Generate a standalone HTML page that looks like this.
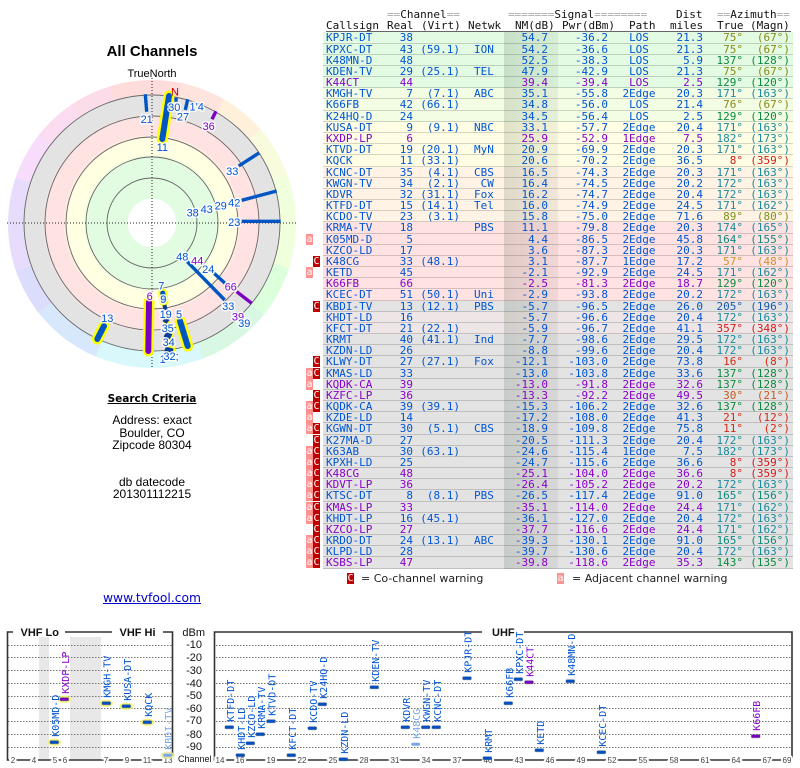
<!DOCTYPE html>
<html><head><meta charset="utf-8"><title>All Channels</title>
<style>
html,body{margin:0;padding:0;background:#fff;width:800px;height:768px;overflow:hidden}
body{position:relative;font-family:"DejaVu Sans",sans-serif}
.t{position:absolute;white-space:pre;color:#000}
.h{position:absolute;font:11px/11px "DejaVu Sans Mono",monospace;white-space:pre;color:#111}
.h em{font-style:normal;color:#aaa}
.r{position:absolute;left:323px;width:470px;font:11px/11px "DejaVu Sans Mono",monospace;color:#0055d5;box-shadow:inset 0 -1px 0 rgba(0,0,0,.16)}
.r b{position:absolute;top:0;font-weight:normal;white-space:pre;z-index:2}
.r b:nth-child(1){left:3px}
.r b:nth-child(2){right:380px}
.r b:nth-child(3){right:333px}
.r b:nth-child(4){left:151px}
.r b:nth-child(5){right:245px}
.r b:nth-child(6){right:185px}
.r b:nth-child(7){left:286px;width:60px;text-align:center}
.r b:nth-child(8){right:90px}
.r b:nth-child(9){right:50px}
.r b:nth-child(10){right:3px}
.p{color:#8800cc}
.g{background:#e2fbe2}.l{background:#f2fde4}.y{background:#fffee4}.o{background:#fef3e4}.k{background:#ffe2e2}.e{background:#e3e3e3}.m{background:#eee6e6}
.r b.A,.r b.C{top:0;width:7px;height:11px;text-align:center;color:#fff;font:10px/11px "DejaVu Sans Mono",monospace}
.r b.A{left:-17px;background:#ff9191}
.r b.C{left:-10px;background:#c00000}
.r b.a1{color:#8a8a14}.r b.a2{color:#0c8a3c}.r b.a3{color:#1a8a9a}.r b.a4{color:#d81818}.r b.a5{color:#d09030}.r b.a6{color:#1858b0}.r b.a7{color:#d82810}.r b.a8{color:#c85820}.r b.a9{color:#7e9018}.r b.a0{color:#108a7a}
#ov{position:absolute;left:504px;top:32px;width:54px;height:537px;background:linear-gradient(90deg,rgba(0,30,0,.12),rgba(0,0,0,.05));z-index:1}
#hue{position:absolute;left:8px;top:79.5px;width:288px;height:288px;border-radius:50%;background:conic-gradient(#ffdcdc 0 12deg,#fee4dc 12deg 30deg,#fff0dc 30deg 49deg,#f8fcdc 49deg 70deg,#f0ffdc 70deg 108deg,#dcffdc 108deg 129deg,#d8f8e4 129deg 159deg,#d8f8fc 159deg 203deg,#d8e8fc 203deg 232deg,#dcdcfc 232deg 251deg,#e8dcfc 251deg 289deg,#f8dcfc 289deg 308deg,#fcdcf0 308deg 326deg,#fcdce8 326deg 343deg,#ffdcdc 343deg 360deg)}
#rad{position:absolute;left:24px;top:95px;width:256px;height:256px;border-radius:50%;background:radial-gradient(circle closest-side,#fff 0,#fff 24px,#e2fce2 24.5px,#e2fce2 64px,#ffffe2 69px,#ffffe2 84px,#ffe2e2 89px,#ffe2e2 105px,#e3e3e3 110px,#e3e3e3 128px)}
svg{position:absolute;left:0;top:0}
.lb{font:11px "Liberation Sans",sans-serif;fill:#0055d5;text-anchor:middle;paint-order:stroke;stroke:rgba(255,255,255,.85);stroke-width:3px;stroke-linejoin:round}
.lp{fill:#8800cc}
.cl{font:10px "DejaVu Sans Mono",monospace;fill:#0055d5}
.cp{fill:#8800cc}.cf{fill:#7ba6e4}
.tk{font:8px "Liberation Sans",sans-serif;fill:#444;text-anchor:middle;paint-order:stroke;stroke:#fff;stroke-width:4px}
.db{font:11px "Liberation Sans",sans-serif;fill:#111;text-anchor:end}
.hd{font:bold 11px "Liberation Sans",sans-serif;fill:#111}
</style></head><body>

<div class="t" style="left:52px;top:43px;width:200px;text-align:center;font:bold 15px/17px 'Liberation Sans',sans-serif">All Channels</div>
<div class="t" style="left:52px;top:68px;width:200px;text-align:center;font:11px/13px 'Liberation Sans',sans-serif">TrueNorth</div>
<div id="hue"></div><div id="rad"></div>

<svg width="800" height="400" viewBox="0 0 800 400">
<g fill="none" stroke="#666" stroke-width=".9">
<circle cx="152" cy="223" r="45"/><circle cx="152" cy="223" r="66"/><circle cx="152" cy="223" r="86"/><circle cx="152" cy="223" r="107"/><circle cx="152" cy="223" r="128"/>
</g>
<g stroke="#222" stroke-width="1" stroke-dasharray="1 2">
<line x1="7" y1="223" x2="297" y2="223"/><line x1="152" y1="78" x2="152" y2="368"/>
</g>
<g stroke-linecap="round" fill="none">
<g stroke="#ffff00" stroke-width="11">
<line x1="169" y1="96" x2="162.3" y2="139"/>
<line x1="149" y1="302" x2="148.3" y2="351"/>
<line x1="180" y1="321" x2="187.7" y2="346"/>
<line x1="104" y1="326" x2="97.3" y2="339"/>
<line x1="162.7" y1="293" x2="164" y2="302" stroke-width="9"/>
<line x1="166" y1="318" x2="172" y2="350" stroke-width="7"/>
</g>
<g stroke="#0055c4" stroke-width="6">
<line x1="169" y1="96" x2="162.3" y2="139"/>
<line x1="180" y1="321" x2="187.7" y2="346"/>
<line x1="104" y1="326" x2="97.3" y2="339"/>
<line x1="162.7" y1="293" x2="164" y2="300" stroke-width="5"/>
</g>
<line x1="149" y1="302" x2="148.3" y2="351" stroke="#7a00c4" stroke-width="6"/>
<g stroke="#0a3f96" stroke-width="4" stroke-linecap="butt">
<line x1="164.5" y1="305" x2="165.5" y2="310"/>
<line x1="164" y1="319" x2="168" y2="322" stroke-width="5"/>
<line x1="165" y1="334" x2="171" y2="337" stroke-width="6"/>
<line x1="165" y1="349" x2="173" y2="351" stroke-width="5"/>
</g>
<g stroke="#0055c4" stroke-width="3.4" stroke-linecap="butt">
<line x1="145.3" y1="94.3" x2="146.7" y2="111.7"/>
<line x1="176" y1="97.7" x2="176" y2="101.7"/>
<line x1="187.7" y1="99.3" x2="185.3" y2="110"/>
<line x1="259" y1="153" x2="238.7" y2="166"/>
<line x1="276.7" y1="191" x2="241.7" y2="200.3"/>
<line x1="280.7" y1="221.3" x2="241.7" y2="221.3"/>
<line x1="187.3" y1="261.7" x2="224.7" y2="300"/>
<line x1="214" y1="273.3" x2="225" y2="283.3"/>
</g>
<g stroke="#7a00c4" stroke-width="3.4" stroke-linecap="butt">
<line x1="216" y1="111.3" x2="212" y2="119.3"/>
<line x1="236.7" y1="291.7" x2="251.7" y2="303.3"/>
</g>
</g>
<text x="175" y="95.5" style="font:11px 'Liberation Sans',sans-serif;fill:#cc0000;text-anchor:middle">N</text>
<g>
<text class="lb" x="146.7" y="123">21</text>
<text class="lb" x="162.3" y="151">11</text>
<text class="lb" x="174.3" y="111">30</text>
<text class="lb" x="183" y="120.5">27</text>
<text class="lb" x="196.7" y="110.5">1'4</text>
<text class="lb lp" x="208.7" y="130">36</text>
<text class="lb" x="232.3" y="175">33</text>
<text class="lb" x="234.3" y="206.5">42</text>
<text class="lb" x="220.7" y="209.5">29</text>
<text class="lb" x="206.7" y="213">43</text>
<text class="lb" x="192.7" y="216.5">38</text>
<text class="lb" x="234.3" y="226">23</text>
<text class="lb" x="182.3" y="260.5">48</text>
<text class="lb lp" x="197.3" y="264.5">44</text>
<text class="lb" x="208.3" y="273">24</text>
<text class="lb lp" x="230.7" y="290.5">66</text>
<text class="lb" x="228.3" y="310">33</text>
<text class="lb lp" x="238" y="320.5">39</text>
<text class="lb" x="244.3" y="327">39</text>
<text class="lb" x="161.3" y="289.5">7</text>
<text class="lb" x="163.3" y="303">9</text>
<text class="lb" x="165.7" y="318">19</text>
<text class="lb" x="167.7" y="332">35</text>
<text class="lb" x="168.7" y="346">34</text>
<text class="lb" x="162.7" y="363">1</text>
<text class="lb" x="171" y="360">32;</text>
<text class="lb lp" x="149.7" y="300">6</text>
<text class="lb" x="179" y="318">5</text>
<text class="lb" x="107.3" y="322">13</text>
</g>
</svg>

<div class="t" style="left:52px;top:392px;width:200px;text-align:center;font:bold 10.5px/14px 'DejaVu Sans',sans-serif;text-decoration:underline">Search Criteria</div>
<div class="t" style="left:52px;top:414px;width:200px;text-align:center;font:12px/12.5px 'Liberation Sans',sans-serif">Address: exact
Boulder, CO
Zipcode 80304</div>
<div class="t" style="left:52px;top:476px;width:200px;text-align:center;font:12px/12px 'Liberation Sans',sans-serif">db datecode
201301112215</div>
<div class="t" style="left:52px;top:591px;width:200px;text-align:center;font:12.3px/15px 'DejaVu Sans',sans-serif;color:#0000cc;text-decoration:underline">www.tvfool.com</div>

<div class="h" style="left:387px;top:9px"><em>==</em>Channel<em>==</em></div>
<div class="h" style="left:508px;top:9px"><em>=======</em>Signal<em>========</em></div>
<div class="h" style="left:676px;top:9px">Dist</div>
<div class="h" style="left:717px;top:9px"><em>==</em>Azimuth<em>==</em></div>
<div class="h" style="left:326px;top:20px">Callsign</div>
<div class="h" style="left:387px;top:20px">Real</div>
<div class="h" style="left:421px;top:20px">(Virt)</div>
<div class="h" style="left:468px;top:20px">Netwk</div>
<div class="h" style="left:515px;top:20px">NM(dB)</div>
<div class="h" style="left:562px;top:20px">Pwr(dBm)</div>
<div class="h" style="left:629px;top:20px">Path</div>
<div class="h" style="left:670px;top:20px">miles</div>
<div class="h" style="left:717px;top:20px">True</div>
<div class="h" style="left:750px;top:20px">(Magn)</div>
<div style="position:absolute;left:326px;top:31px;width:465px;height:1px;background:#666"></div>

<div class="r g" style="top:32px;height:12px"><b>KPJR-DT</b><b>38</b><b></b><b></b><b>54.7</b><b>-36.2</b><b>LOS</b><b>21.3</b><b class="a1">75°</b><b class="a1">(67°)</b></div>
<div class="r g" style="top:44px;height:11px"><b>KPXC-DT</b><b>43</b><b>(59.1)</b><b>ION</b><b>54.2</b><b>-36.6</b><b>LOS</b><b>21.3</b><b class="a1">75°</b><b class="a1">(67°)</b></div>
<div class="r g" style="top:55px;height:11px"><b>K48MN-D</b><b>48</b><b></b><b></b><b>52.5</b><b>-38.3</b><b>LOS</b><b>5.9</b><b class="a2">137°</b><b class="a2">(128°)</b></div>
<div class="r g" style="top:66px;height:11px"><b>KDEN-TV</b><b>29</b><b>(25.1)</b><b>TEL</b><b>47.9</b><b>-42.9</b><b>LOS</b><b>21.3</b><b class="a1">75°</b><b class="a1">(67°)</b></div>
<div class="r g p" style="top:77px;height:11px"><b>K44CT</b><b>44</b><b></b><b></b><b>39.4</b><b>-39.4</b><b>LOS</b><b>2.5</b><b class="a2">129°</b><b class="a2">(120°)</b></div>
<div class="r l" style="top:88px;height:11px"><b>KMGH-TV</b><b>7</b><b>(7.1)</b><b>ABC</b><b>35.1</b><b>-55.8</b><b>2Edge</b><b>20.3</b><b class="a3">171°</b><b class="a3">(163°)</b></div>
<div class="r l" style="top:99px;height:12px"><b>K66FB</b><b>42</b><b>(66.1)</b><b></b><b>34.8</b><b>-56.0</b><b>LOS</b><b>21.4</b><b class="a1">76°</b><b class="a1">(67°)</b></div>
<div class="r l" style="top:111px;height:11px"><b>K24HQ-D</b><b>24</b><b></b><b></b><b>34.5</b><b>-56.4</b><b>LOS</b><b>2.5</b><b class="a2">129°</b><b class="a2">(120°)</b></div>
<div class="r y" style="top:122px;height:11px"><b>KUSA-DT</b><b>9</b><b>(9.1)</b><b>NBC</b><b>33.1</b><b>-57.7</b><b>2Edge</b><b>20.4</b><b class="a3">171°</b><b class="a3">(163°)</b></div>
<div class="r y p" style="top:133px;height:11px"><b>KXDP-LP</b><b>6</b><b></b><b></b><b>25.9</b><b>-52.9</b><b>1Edge</b><b>7.5</b><b class="a3">182°</b><b class="a3">(173°)</b></div>
<div class="r y" style="top:144px;height:11px"><b>KTVD-DT</b><b>19</b><b>(20.1)</b><b>MyN</b><b>20.9</b><b>-69.9</b><b>2Edge</b><b>20.3</b><b class="a3">171°</b><b class="a3">(163°)</b></div>
<div class="r y" style="top:155px;height:12px"><b>KQCK</b><b>11</b><b>(33.1)</b><b></b><b>20.6</b><b>-70.2</b><b>2Edge</b><b>36.5</b><b class="a4">8°</b><b class="a4">(359°)</b></div>
<div class="r o" style="top:167px;height:11px"><b>KCNC-DT</b><b>35</b><b>(4.1)</b><b>CBS</b><b>16.5</b><b>-74.3</b><b>2Edge</b><b>20.3</b><b class="a3">171°</b><b class="a3">(163°)</b></div>
<div class="r o" style="top:178px;height:11px"><b>KWGN-TV</b><b>34</b><b>(2.1)</b><b> CW</b><b>16.4</b><b>-74.5</b><b>2Edge</b><b>20.2</b><b class="a3">172°</b><b class="a3">(163°)</b></div>
<div class="r o" style="top:189px;height:11px"><b>KDVR</b><b>32</b><b>(31.1)</b><b>Fox</b><b>16.2</b><b>-74.7</b><b>2Edge</b><b>20.4</b><b class="a3">172°</b><b class="a3">(163°)</b></div>
<div class="r o" style="top:200px;height:11px"><b>KTFD-DT</b><b>15</b><b>(14.1)</b><b>Tel</b><b>16.0</b><b>-74.9</b><b>2Edge</b><b>24.5</b><b class="a3">171°</b><b class="a3">(162°)</b></div>
<div class="r o" style="top:211px;height:11px"><b>KCDO-TV</b><b>23</b><b>(3.1)</b><b></b><b>15.8</b><b>-75.0</b><b>2Edge</b><b>71.6</b><b class="a9">89°</b><b class="a9">(80°)</b></div>
<div class="r k" style="top:222px;height:12px"><b>KRMA-TV</b><b>18</b><b></b><b>PBS</b><b>11.1</b><b>-79.8</b><b>2Edge</b><b>20.3</b><b class="a3">174°</b><b class="a3">(165°)</b></div>
<div class="r k" style="top:234px;height:11px"><b>K05MD-D</b><b>5</b><b></b><b></b><b>4.4</b><b>-86.5</b><b>2Edge</b><b>45.8</b><b class="a0">164°</b><b class="a0">(155°)</b><b class="A">a</b></div>
<div class="r k" style="top:245px;height:11px"><b>KZCO-LD</b><b>17</b><b></b><b></b><b>3.6</b><b>-87.3</b><b>2Edge</b><b>20.3</b><b class="a3">171°</b><b class="a3">(163°)</b></div>
<div class="r k" style="top:256px;height:11px"><b>K48CG</b><b>33</b><b>(48.1)</b><b></b><b>3.1</b><b>-87.7</b><b>1Edge</b><b>17.2</b><b class="a5">57°</b><b class="a5">(48°)</b><b class="C">C</b></div>
<div class="r k" style="top:267px;height:11px"><b>KETD</b><b>45</b><b></b><b></b><b>-2.1</b><b>-92.9</b><b>2Edge</b><b>24.5</b><b class="a3">171°</b><b class="a3">(162°)</b><b class="A">a</b></div>
<div class="r k p" style="top:278px;height:11px"><b>K66FB</b><b>66</b><b></b><b></b><b>-2.5</b><b>-81.3</b><b>2Edge</b><b>18.7</b><b class="a2">129°</b><b class="a2">(120°)</b></div>
<div class="r k" style="top:289px;height:12px"><b>KCEC-DT</b><b>51</b><b>(50.1)</b><b>Uni</b><b>-2.9</b><b>-93.8</b><b>2Edge</b><b>20.2</b><b class="a3">172°</b><b class="a3">(163°)</b></div>
<div class="r e" style="top:301px;height:11px"><b>KBDI-TV</b><b>13</b><b>(12.1)</b><b>PBS</b><b>-5.7</b><b>-96.5</b><b>2Edge</b><b>26.0</b><b class="a6">205°</b><b class="a6">(196°)</b><b class="C">C</b></div>
<div class="r m" style="top:312px;height:11px"><b>KHDT-LD</b><b>16</b><b></b><b></b><b>-5.7</b><b>-96.6</b><b>2Edge</b><b>20.4</b><b class="a3">172°</b><b class="a3">(163°)</b></div>
<div class="r m" style="top:323px;height:11px"><b>KFCT-DT</b><b>21</b><b>(22.1)</b><b></b><b>-5.9</b><b>-96.7</b><b>2Edge</b><b>41.1</b><b class="a4">357°</b><b class="a4">(348°)</b></div>
<div class="r e" style="top:334px;height:11px"><b>KRMT</b><b>40</b><b>(41.1)</b><b>Ind</b><b>-7.7</b><b>-98.6</b><b>2Edge</b><b>29.5</b><b class="a3">172°</b><b class="a3">(163°)</b></div>
<div class="r e" style="top:345px;height:11px"><b>KZDN-LD</b><b>26</b><b></b><b></b><b>-8.8</b><b>-99.6</b><b>2Edge</b><b>20.4</b><b class="a3">172°</b><b class="a3">(163°)</b></div>
<div class="r e" style="top:356px;height:12px"><b>KLWY-DT</b><b>27</b><b>(27.1)</b><b>Fox</b><b>-12.1</b><b>-103.0</b><b>2Edge</b><b>73.8</b><b class="a7">16°</b><b class="a7">(8°)</b><b class="C">C</b></div>
<div class="r e" style="top:368px;height:11px"><b>KMAS-LD</b><b>33</b><b></b><b></b><b>-13.0</b><b>-103.8</b><b>2Edge</b><b>33.6</b><b class="a2">137°</b><b class="a2">(128°)</b><b class="A">a</b><b class="C">C</b></div>
<div class="r e p" style="top:379px;height:11px"><b>KQDK-CA</b><b>39</b><b></b><b></b><b>-13.0</b><b>-91.8</b><b>2Edge</b><b>32.6</b><b class="a2">137°</b><b class="a2">(128°)</b><b class="A">a</b></div>
<div class="r e p" style="top:390px;height:11px"><b>KZFC-LP</b><b>36</b><b></b><b></b><b>-13.3</b><b>-92.2</b><b>2Edge</b><b>49.5</b><b class="a8">30°</b><b class="a8">(21°)</b><b class="C">C</b></div>
<div class="r e" style="top:401px;height:11px"><b>KQDK-CA</b><b>39</b><b>(39.1)</b><b></b><b>-15.3</b><b>-106.2</b><b>2Edge</b><b>32.6</b><b class="a2">137°</b><b class="a2">(128°)</b><b class="A">a</b><b class="C">C</b></div>
<div class="r e" style="top:412px;height:11px"><b>KZDE-LD</b><b>14</b><b></b><b></b><b>-17.2</b><b>-108.0</b><b>2Edge</b><b>41.3</b><b class="a7">21°</b><b class="a7">(12°)</b><b class="A">a</b></div>
<div class="r e" style="top:423px;height:12px"><b>KGWN-DT</b><b>30</b><b>(5.1)</b><b>CBS</b><b>-18.9</b><b>-109.8</b><b>2Edge</b><b>75.8</b><b class="a7">11°</b><b class="a7">(2°)</b><b class="A">a</b><b class="C">C</b></div>
<div class="r e" style="top:435px;height:11px"><b>K27MA-D</b><b>27</b><b></b><b></b><b>-20.5</b><b>-111.3</b><b>2Edge</b><b>20.4</b><b class="a3">172°</b><b class="a3">(163°)</b><b class="C">C</b></div>
<div class="r e" style="top:446px;height:11px"><b>K63AB</b><b>30</b><b>(63.1)</b><b></b><b>-24.6</b><b>-115.4</b><b>1Edge</b><b>7.5</b><b class="a3">182°</b><b class="a3">(173°)</b><b class="A">a</b><b class="C">C</b></div>
<div class="r e" style="top:457px;height:11px"><b>KPXH-LD</b><b>25</b><b></b><b></b><b>-24.7</b><b>-115.6</b><b>2Edge</b><b>36.6</b><b class="a4">8°</b><b class="a4">(359°)</b><b class="A">a</b><b class="C">C</b></div>
<div class="r e p" style="top:468px;height:11px"><b>K48CG</b><b>48</b><b></b><b></b><b>-25.1</b><b>-104.0</b><b>2Edge</b><b>36.6</b><b class="a4">8°</b><b class="a4">(359°)</b><b class="A">a</b><b class="C">C</b></div>
<div class="r e p" style="top:479px;height:11px"><b>KDVT-LP</b><b>36</b><b></b><b></b><b>-26.4</b><b>-105.2</b><b>2Edge</b><b>20.2</b><b class="a3">172°</b><b class="a3">(163°)</b><b class="A">a</b><b class="C">C</b></div>
<div class="r e" style="top:490px;height:12px"><b>KTSC-DT</b><b>8</b><b>(8.1)</b><b>PBS</b><b>-26.5</b><b>-117.4</b><b>2Edge</b><b>91.0</b><b class="a0">165°</b><b class="a0">(156°)</b><b class="A">a</b><b class="C">C</b></div>
<div class="r e p" style="top:502px;height:11px"><b>KMAS-LP</b><b>33</b><b></b><b></b><b>-35.1</b><b>-114.0</b><b>2Edge</b><b>24.4</b><b class="a3">171°</b><b class="a3">(162°)</b><b class="A">a</b><b class="C">C</b></div>
<div class="r e" style="top:513px;height:11px"><b>KHDT-LP</b><b>16</b><b>(45.1)</b><b></b><b>-36.1</b><b>-127.0</b><b>2Edge</b><b>20.4</b><b class="a3">172°</b><b class="a3">(163°)</b><b class="A">a</b><b class="C">C</b></div>
<div class="r e p" style="top:524px;height:11px"><b>KZCO-LP</b><b>27</b><b></b><b></b><b>-37.7</b><b>-116.6</b><b>2Edge</b><b>24.4</b><b class="a3">171°</b><b class="a3">(162°)</b><b class="C">C</b></div>
<div class="r e" style="top:535px;height:11px"><b>KRDO-DT</b><b>24</b><b>(13.1)</b><b>ABC</b><b>-39.3</b><b>-130.1</b><b>2Edge</b><b>91.0</b><b class="a0">165°</b><b class="a0">(156°)</b><b class="A">a</b><b class="C">C</b></div>
<div class="r e" style="top:546px;height:11px"><b>KLPD-LD</b><b>28</b><b></b><b></b><b>-39.7</b><b>-130.6</b><b>2Edge</b><b>20.4</b><b class="a3">172°</b><b class="a3">(163°)</b><b class="A">a</b><b class="C">C</b></div>
<div class="r e p" style="top:557px;height:12px"><b>KSBS-LP</b><b>47</b><b></b><b></b><b>-39.8</b><b>-118.6</b><b>2Edge</b><b>35.3</b><b class="a2">143°</b><b class="a2">(135°)</b><b class="A">a</b><b class="C">C</b></div>
<div id="ov"></div>

<div style="position:absolute;left:347px;top:573px;width:7px;height:11px;background:#c00000;color:#fff;font:10px/11px 'DejaVu Sans Mono',monospace;text-align:center">C</div>
<div class="t" style="left:361px;top:572px;font:11px/14px 'DejaVu Sans',sans-serif;color:#222">= Co-channel warning</div>
<div style="position:absolute;left:557px;top:573px;width:7px;height:11px;background:#ff9191;color:#fff;font:10px/11px 'DejaVu Sans Mono',monospace;text-align:center">a</div>
<div class="t" style="left:572px;top:572px;font:11px/14px 'DejaVu Sans',sans-serif;color:#222">= Adjacent channel warning</div>

<svg width="800" height="768" viewBox="0 0 800 768" style="pointer-events:none">
<rect x="39" y="637" width="10" height="123" fill="#e8e8e8"/>
<rect x="70" y="637" width="31" height="123" fill="#e8e8e8"/>
<g stroke="#777" stroke-width="1" stroke-dasharray="1.5 1.5">
<path d="M8 645.5H172M8 657.5H172M8 670.5H172M8 683.5H172M8 696.5H172M8 708.5H172M8 721.5H172M8 734.5H172M8 747.5H172"/>
<path d="M216 645.5H791M216 657.5H791M216 670.5H791M216 683.5H791M216 696.5H791M216 708.5H791M216 721.5H791M216 734.5H791M216 747.5H791"/>
</g>
<g fill="none" stroke="#333" stroke-width="1.6">
<path d="M13 632H7.5V760H172.5V632H163M65 632H112"/>
<path d="M482 632H214.5V760H792V632H524"/>
</g>
<text class="hd" x="20.5" y="636">VHF Lo</text>
<text class="hd" x="119.5" y="636">VHF Hi</text>
<text class="hd" x="492" y="636">UHF</text>
<text class="db" x="205" y="636">dBm</text>
<text class="db" x="202" y="648">-10</text>
<text class="db" x="202" y="661">-20</text>
<text class="db" x="202" y="674">-30</text>
<text class="db" x="202" y="687">-40</text>
<text class="db" x="202" y="699">-50</text>
<text class="db" x="202" y="712">-60</text>
<text class="db" x="202" y="724">-70</text>
<text class="db" x="202" y="738">-80</text>
<text class="db" x="202" y="750">-90</text>
<text x="178" y="762" style="font:9px 'Liberation Sans',sans-serif;fill:#111">Channel</text>
<g>
<text class="tk" x="13" y="763">2</text><text class="tk" x="34" y="763">4</text><text class="tk" x="55" y="763">5</text><text class="tk" x="65" y="763">6</text><text class="tk" x="106" y="763">7</text><text class="tk" x="127" y="763">9</text><text class="tk" x="147" y="763">11</text><text class="tk" x="168" y="763">13</text>
<text class="tk" x="220" y="763">14</text><text class="tk" x="240" y="763">16</text><text class="tk" x="271" y="763">19</text><text class="tk" x="302" y="763">22</text><text class="tk" x="333" y="763">25</text><text class="tk" x="364" y="763">28</text><text class="tk" x="395" y="763">31</text><text class="tk" x="426" y="763">34</text><text class="tk" x="457" y="763">37</text><text class="tk" x="488" y="763">40</text><text class="tk" x="519" y="763">43</text><text class="tk" x="550" y="763">46</text><text class="tk" x="581" y="763">49</text><text class="tk" x="612" y="763">52</text><text class="tk" x="643" y="763">55</text><text class="tk" x="674" y="763">58</text><text class="tk" x="705" y="763">61</text><text class="tk" x="736" y="763">64</text><text class="tk" x="767" y="763">67</text><text class="tk" x="787" y="763">69</text>
</g>
<g fill="#f5f56a" opacity=".85">
<ellipse cx="54.3" cy="742.3" rx="7" ry="3.7"/><ellipse cx="64.3" cy="699.3" rx="7" ry="3.7"/><ellipse cx="106" cy="703.3" rx="7" ry="3.7"/><ellipse cx="126.3" cy="706.3" rx="7" ry="3.7"/><ellipse cx="147.3" cy="722.3" rx="7" ry="3.7"/><ellipse cx="167.7" cy="755.3" rx="7" ry="3.7" fill="#e8e8a0"/>
</g>
<g fill="#0050c4" stroke="rgba(60,80,130,.45)" stroke-width="1">
<rect x="50" y="740.8" width="8.6" height="3" rx="1"/><rect x="102" y="701.8" width="8.6" height="3" rx="1"/><rect x="122" y="704.8" width="8.6" height="3" rx="1"/><rect x="143" y="720.8" width="8.6" height="3" rx="1"/>
<rect x="225" y="725.8" width="8.6" height="3" rx="1"/><rect x="236" y="753.8" width="8.6" height="3" rx="1"/><rect x="246" y="741.8" width="8.6" height="3" rx="1"/><rect x="256" y="732.8" width="8.6" height="3" rx="1"/><rect x="266.7" y="719.8" width="8.6" height="3" rx="1"/><rect x="287" y="753.8" width="8.6" height="3" rx="1"/><rect x="308" y="726.8" width="8.6" height="3" rx="1"/><rect x="318" y="702.8" width="8.6" height="3" rx="1"/><rect x="339" y="757.8" width="8.6" height="3" rx="1"/><rect x="370" y="685.8" width="8.6" height="3" rx="1"/><rect x="401" y="725.8" width="8.6" height="3" rx="1"/><rect x="421.4" y="725.8" width="8.6" height="3" rx="1"/><rect x="432" y="725.8" width="8.6" height="3" rx="1"/><rect x="462.7" y="676.8" width="8.6" height="3" rx="1"/><rect x="483" y="756.8" width="8.6" height="3" rx="1"/><rect x="504" y="701.8" width="8.6" height="3" rx="1"/><rect x="514" y="677.8" width="8.6" height="3" rx="1"/><rect x="566" y="679.8" width="8.6" height="3" rx="1"/><rect x="535" y="748.8" width="8.6" height="3" rx="1"/><rect x="597" y="750.8" width="8.6" height="3" rx="1"/>
</g>
<g fill="#7a00c4" stroke="rgba(60,60,100,.4)" stroke-width="1">
<rect x="60" y="697.8" width="8.6" height="3" rx="1"/><rect x="524.7" y="680.8" width="8.6" height="3" rx="1"/><rect x="751.4" y="734.8" width="8.6" height="3" rx="1"/>
</g>
<rect x="163.4" y="753.8" width="8.6" height="3" rx="1" fill="#7ba6e4"/>
<rect x="411.4" y="742.8" width="8.6" height="3" rx="1" fill="#7ba6e4"/>
<text class="cl" transform="translate(58.8,736.8) rotate(-90)">K05MD-D</text>
<text class="cl cp" transform="translate(68.8,693.8) rotate(-90)">KXDP-LP</text>
<text class="cl" transform="translate(110.5,697.8) rotate(-90)">KMGH-TV</text>
<text class="cl" transform="translate(130.8,700.8) rotate(-90)">KUSA-DT</text>
<text class="cl" transform="translate(151.8,716.8) rotate(-90)">KQCK</text>
<text class="cl cf" transform="translate(172.2,749.8) rotate(-90)">KBDI-TV</text>
<text class="cl" transform="translate(233.8,721.8) rotate(-90)">KTFD-DT</text>
<text class="cl" transform="translate(244.8,749.8) rotate(-90)">KHDT-LD</text>
<text class="cl" transform="translate(254.8,737.8) rotate(-90)">KZCO-LD</text>
<text class="cl" transform="translate(264.8,728.8) rotate(-90)">KRMA-TV</text>
<text class="cl" transform="translate(275.5,715.8) rotate(-90)">KTVD-DT</text>
<text class="cl" transform="translate(295.8,749.8) rotate(-90)">KFCT-DT</text>
<text class="cl" transform="translate(316.8,722.8) rotate(-90)">KCDO-TV</text>
<text class="cl" transform="translate(326.8,698.8) rotate(-90)">K24HQ-D</text>
<text class="cl" transform="translate(347.8,753.8) rotate(-90)">KZDN-LD</text>
<text class="cl" transform="translate(378.8,681.8) rotate(-90)">KDEN-TV</text>
<text class="cl" transform="translate(409.8,721.8) rotate(-90)">KDVR</text>
<text class="cl cf" transform="translate(420.2,738.8) rotate(-90)">K48CG</text>
<text class="cl" transform="translate(430.2,721.8) rotate(-90)">KWGN-TV</text>
<text class="cl" transform="translate(440.8,721.8) rotate(-90)">KCNC-DT</text>
<text class="cl" transform="translate(471.5,672.8) rotate(-90)">KPJR-DT</text>
<text class="cl" transform="translate(491.8,752.8) rotate(-90)">KRMT</text>
<text class="cl" transform="translate(512.8,697.8) rotate(-90)">K66FB</text>
<text class="cl" transform="translate(522.8,673.8) rotate(-90)">KPXC-DT</text>
<text class="cl cp" transform="translate(533.5,676.8) rotate(-90)">K44CT</text>
<text class="cl" transform="translate(574.8,675.8) rotate(-90)">K48MN-D</text>
<text class="cl" transform="translate(543.8,744.8) rotate(-90)">KETD</text>
<text class="cl" transform="translate(605.8,746.8) rotate(-90)">KCEC-DT</text>
<text class="cl cp" transform="translate(760.2,730.8) rotate(-90)">K66FB</text>
</svg>
</body></html>
